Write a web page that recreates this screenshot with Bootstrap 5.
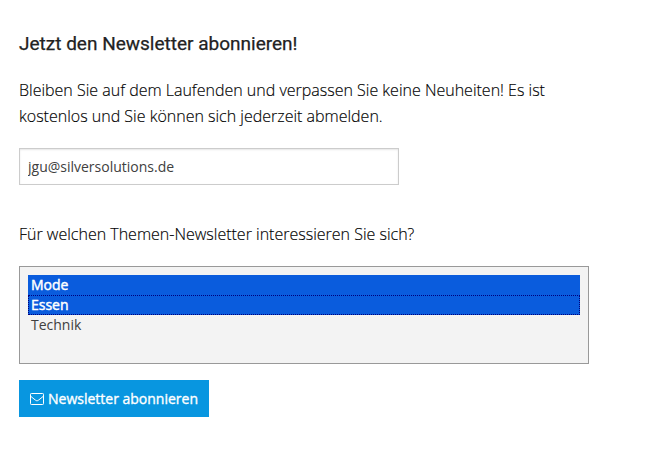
<!DOCTYPE html>
<html lang="de">
<head>
<meta charset="utf-8">
<meta name="viewport" content="width=device-width, initial-scale=1">
<title>Newsletter</title>
<link href="https://cdn.jsdelivr.net/npm/bootstrap@5.3.0/dist/css/bootstrap.min.css" rel="stylesheet">
<style>
body { font-family: "Open Sans", sans-serif; font-size: 16px; line-height: 26px; color: #222; background: #fff; }
.signup { padding: 31px 0 0 19px; width: 589px; }
.signup-title { font-family: Roboto, sans-serif; font-size: 19px; font-weight: 400; -webkit-text-stroke: .25px #222; line-height: 26px; margin-bottom: 20px; color: #222; }
.intro { font-weight: 300; width: 550px; margin-bottom: 19px; color: #000; -webkit-text-stroke: .15px #000; }
.mail-field { width: 380px; height: 37px; padding: 8px; font-size: 14px; line-height: 19px; color: #404040; border-color: #ccc; box-shadow: inset 0 1px 2px rgba(0,0,0,.1); margin-bottom: 36px; }
.question { font-weight: 300; margin-bottom: 19px; color: #000; -webkit-text-stroke: .15px #000; }
.topics { height: 98px; padding: 8px; background: #f3f3f3; border: 1px solid #999; font-size: 14px; line-height: 20px; color: #404040; margin-bottom: 16px; }
.topic { height: 20px; padding: 0 3px; }
.topic.chosen { background: #0a5cdd; color: #fff; -webkit-text-stroke: .45px #fff; }
.topic.current { border: 1px dotted #00007c; line-height: 18px; padding: 0 2px; }
.send { background: #0896e0; color: #fff; width: 190px; height: 37px; padding: 0 0 0 11px; font-size: 14px; font-weight: 400; -webkit-text-stroke: .35px #fff; line-height: 37px; border: 0; }
</style>
</head>
<body>
<main class="signup">
  <h1 class="signup-title"><span>Jetzt den Newsletter abonnieren!</span></h1>
  <p class="intro"><span>Bleiben Sie auf dem Laufenden und verpassen Sie keine Neuheiten! Es ist</span><br><span>kostenlos und Sie können sich jederzeit abmelden.</span></p>
  <input class="form-control rounded-0 mail-field" type="email" value="jgu@silversolutions.de" aria-label="E-Mail">
  <p class="question"><span>Für welchen Themen-Newsletter interessieren Sie sich?</span></p>
  <div class="topics" role="listbox" aria-multiselectable="true">
    <div class="topic chosen" role="option" aria-selected="true"><span>Mode</span></div>
    <div class="topic chosen current" role="option" aria-selected="true"><span>Essen</span></div>
    <div class="topic" role="option"><span>Technik</span></div>
  </div>
  <button class="btn send rounded-0 d-flex align-items-center text-nowrap" type="button">
    <svg class="flex-shrink-0 me-1" width="14" height="12" viewBox="0 0 14 12" fill="none" stroke="#fff" aria-hidden="true"><rect x=".5" y=".5" width="13" height="11" rx=".8"/><path d="M.6 3.2C2.2 4.6 3.8 5.800 5.300 7c.7.550 1.100.800 1.700.800S8 7.550 8.700 7c1.500-1.200 3.100-2.400 4.700-3.800"/></svg>
    <span>Newsletter abonnieren</span>
  </button>
</main>
<script src="https://cdn.jsdelivr.net/npm/bootstrap@5.3.0/dist/js/bootstrap.bundle.min.js"></script>
</body>
</html>
